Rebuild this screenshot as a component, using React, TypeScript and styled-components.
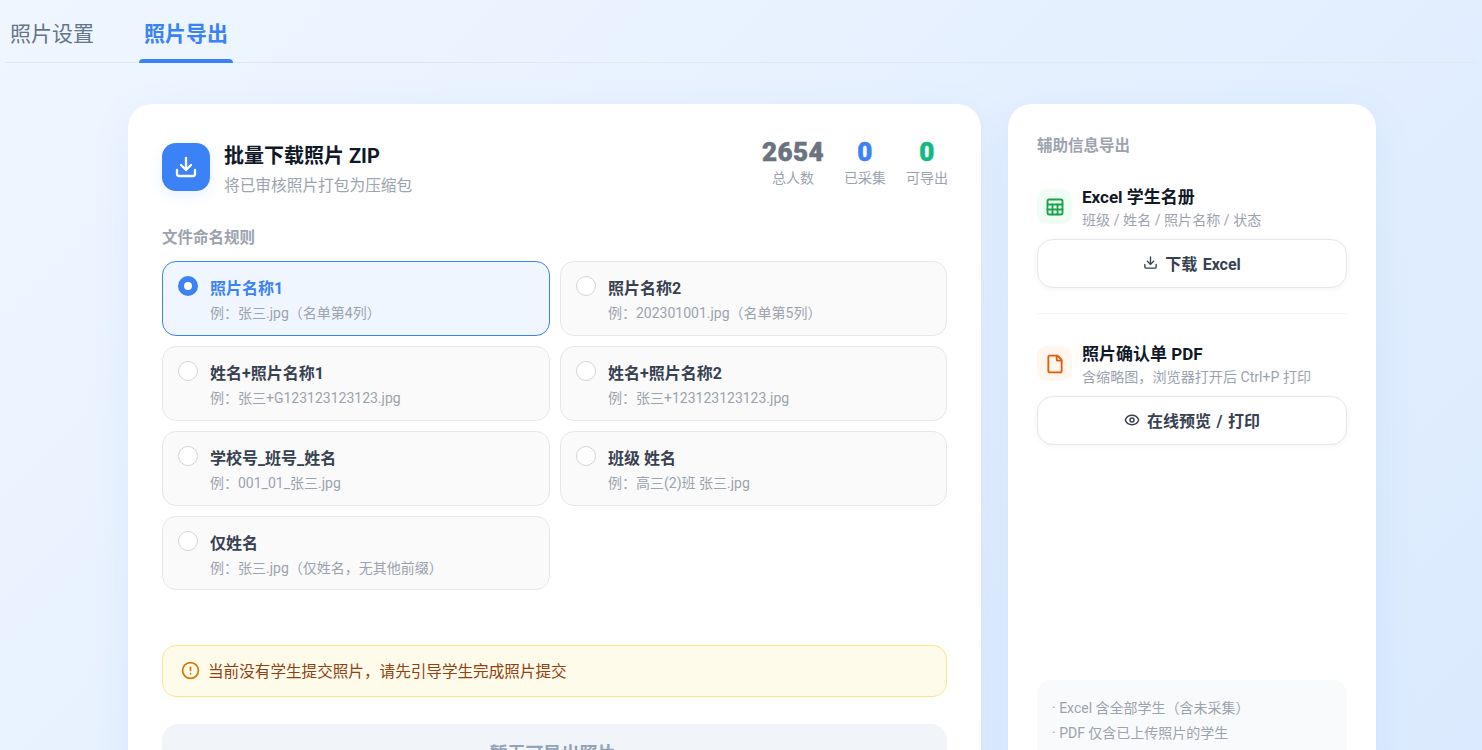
import React from 'react';
import styled, { createGlobalStyle } from 'styled-components';
import { Download, Sheet, File, Eye, CircleAlert } from 'lucide-react';

const Global = createGlobalStyle`
  html, body { margin: 0; padding: 0; height: 750px; overflow: hidden; }
  body {
    font-family: Roboto, "Noto Sans", "Noto Sans CJK SC", sans-serif;
    background: linear-gradient(135deg, #eff6ff 0%, #dbeafe 100%);
  }
  * { box-sizing: border-box; }
`;

const Page = styled.div`
  padding: 0 5px;
`;
const Tabs = styled.nav`
  display: flex;
  gap: 40px;
  height: 63px;
  border-bottom: 1px solid #e2e8f0;
`;
const Tab = styled.div<{ $active?: boolean }>`
  position: relative;
  width: 94px;
  padding: 20px 5px 0;
  font-size: 21px;
  line-height: 29px;
  font-weight: ${(p) => (p.$active ? 700 : 400)};
  color: ${(p) => (p.$active ? '#3b82f6' : '#64748b')};
  ${(p) =>
    p.$active &&
    `&::after {
      content: '';
      position: absolute;
      left: 0; right: 0; bottom: -1px;
      height: 4px;
      border-radius: 4px 4px 0 0;
      background: #3b82f6;
    }`}
`;
const Content = styled.main`
  display: grid;
  grid-template-columns: 853px 368px;
  gap: 27px;
  padding: 41px 0 0 123px;
  align-items: stretch;
`;
const Card = styled.section`
  background: #fff;
  border-radius: 24px;
  box-shadow: 0 10px 40px rgba(59, 130, 246, 0.08);
`;
const MainCard = styled(Card)`
  padding: 39px 34px;
`;
const Header = styled.header`
  display: flex;
  align-items: center;
  justify-content: space-between;
  height: 48px;
`;
const HeaderLeft = styled.div`
  display: flex;
  align-items: center;
  gap: 14px;
`;
const HeroText = styled.div`
  padding-top: 5px;
`;
const HeroIcon = styled.div`
  width: 48px;
  height: 48px;
  border-radius: 14px;
  background: #3b82f6;
  color: #fff;
  display: flex;
  align-items: center;
  justify-content: center;
  box-shadow: 0 4px 14px rgba(59, 130, 246, 0.12);
`;
const HeroTitle = styled.h1`
  margin: 0;
  font-size: 20px;
  line-height: 28px;
  font-weight: 700;
  color: #111827;
`;
const HeroSub = styled.p`
  margin: 5px 0 0;
  font-size: 15.7px;
  line-height: 22px;
  color: #9ca3af;
`;
const Stats = styled.div`
  display: flex;
  gap: 20px;
  margin: 0 -1px 10px 0;
`;
const Stat = styled.div`
  display: flex;
  flex-direction: column;
  align-items: center;
`;
const StatValue = styled.div<{ $color: string }>`
  font-size: 26px;
  line-height: 32px;
  font-weight: 900;
  letter-spacing: 0.4px;
  -webkit-text-stroke: 0.5px ${(p) => p.$color};
  color: ${(p) => p.$color};
`;
const StatLabel = styled.div`
  font-size: 14px;
  line-height: 20px;
  color: #9ca3af;
`;
const SectionLabel = styled.div`
  font-size: 15.5px;
  line-height: 22px;
  font-weight: 700;
  color: #9ca3af;
  height: 24px;
`;
const RuleLabel = styled(SectionLabel)`
  margin-top: 36px;
`;
const Options = styled.div`
  display: grid;
  grid-template-columns: 388px 387px;
  grid-auto-rows: 74.75px;
  gap: 10px;
  margin-top: 10.3px;
`;
const Option = styled.div<{ $active?: boolean }>`
  display: flex;
  gap: 12px;
  padding: 14px 15px;
  border-radius: 14px;
  border: 1px solid ${(p) => (p.$active ? '#3b82f6' : '#e5e7eb')};
  background: ${(p) => (p.$active ? '#eff6ff' : '#fafafa')};
`;
const Radio = styled.span<{ $active?: boolean }>`
  flex: none;
  width: 20px;
  height: 20px;
  border-radius: 50%;
  background: #fff;
  border: ${(p) => (p.$active ? '6px solid #3b82f6' : '1px solid #d1d5db')};
`;
const OptionText = styled.div`
  padding-top: 1px;
`;
const OptionTitle = styled.div<{ $active?: boolean }>`
  font-size: 16px;
  line-height: 24px;
  font-weight: 700;
  color: ${(p) => (p.$active ? '#3b82f6' : '#374151')};
`;
const OptionExample = styled.div`
  margin-top: 3px;
  font-size: 14px;
  line-height: 18px;
  color: #9ca3af;
`;
const Alert = styled.div`
  display: flex;
  align-items: center;
  gap: 8px;
  height: 52px;
  margin-top: 54.7px;
  padding: 0 18px 2px;
  border-radius: 14px;
  border: 1px solid #fde68a;
  background: #fffbeb;
  font-size: 15.6px;
  color: #92400e;
  svg { color: #d97706; flex: none; margin-top: 2px; }
`;
const PrimaryButton = styled.button`
  display: block;
  width: 100%;
  height: 56px;
  margin-top: 27px;
  padding: 0 4px 0 0;
  border: none;
  border-radius: 16px;
  background: #f1f5f9;
  color: #94a3b8;
  font: inherit;
  font-size: 18px;
  font-weight: 700;
`;
const SideCard = styled(Card)`
  display: flex;
  flex-direction: column;
  padding: 31px 29px 39px;
`;
const ExportBlock = styled.div`
  margin-top: 26px;
`;
const ExportHead = styled.div`
  display: flex;
  gap: 10px;
  align-items: flex-start;
`;
const ExportIcon = styled.div<{ $bg: string; $fg: string }>`
  width: 35px;
  height: 35px;
  margin-top: 4px;
  border-radius: 10px;
  background: ${(p) => p.$bg};
  color: ${(p) => p.$fg};
  display: flex;
  align-items: center;
  justify-content: center;
`;
const ExportTitle = styled.div`
  font-size: 17px;
  line-height: 24px;
  font-weight: 700;
  color: #111827;
`;
const ExportSub = styled.div`
  font-size: 14.1px;
  line-height: 22px;
  color: #9ca3af;
`;
const OutlineButton = styled.button`
  display: flex;
  align-items: center;
  justify-content: center;
  gap: 7px;
  width: 100%;
  height: 49px;
  margin-top: 8px;
  padding: 0 0 2px;
  border: 1px solid #e5e7eb;
  border-radius: 16px;
  background: #fff;
  box-shadow: 0 1px 6px rgba(0, 0, 0, 0.05);
  color: #374151;
  font: inherit;
  font-size: 16px;
  font-weight: 700;
  word-spacing: 1.5px;
`;
const Divider = styled.hr`
  margin: 25px 0 2px;
  border: none;
  border-top: 1px solid #f3f4f6;
`;
const Note = styled.div`
  margin-top: auto;
  padding: 16px 15px 15px;
  min-height: 100px;
  border-radius: 14px;
  background: #f9fafb;
  font-size: 14px;
  line-height: 25px;
  color: #9ca3af;
`;

const options = [
  ['照片名称1', '例：张三.jpg（名单第4列）'],
  ['照片名称2', '例：202301001.jpg（名单第5列）'],
  ['姓名+照片名称1', '例：张三+G123123123123.jpg'],
  ['姓名+照片名称2', '例：张三+123123123123.jpg'],
  ['学校号_班号_姓名', '例：001_01_张三.jpg'],
  ['班级 姓名', '例：高三(2)班 张三.jpg'],
  ['仅姓名', '例：张三.jpg（仅姓名，无其他前缀）'],
];

export default function App() {
  return (
    <Page>
      <Global />
      <Tabs>
        <Tab>照片设置</Tab>
        <Tab $active>照片导出</Tab>
      </Tabs>
      <Content>
        <MainCard>
          <Header>
            <HeaderLeft>
              <HeroIcon><Download size={24} strokeWidth={2.3} /></HeroIcon>
              <HeroText>
                <HeroTitle>批量下载照片 ZIP</HeroTitle>
                <HeroSub>将已审核照片打包为压缩包</HeroSub>
              </HeroText>
            </HeaderLeft>
            <Stats>
              <Stat><StatValue $color="#6b7280">2654</StatValue><StatLabel>总人数</StatLabel></Stat>
              <Stat><StatValue $color="#3b82f6">0</StatValue><StatLabel>已采集</StatLabel></Stat>
              <Stat><StatValue $color="#10b981">0</StatValue><StatLabel>可导出</StatLabel></Stat>
            </Stats>
          </Header>
          <RuleLabel>文件命名规则</RuleLabel>
          <Options>
            {options.map(([t, e], i) => (
              <Option key={t} $active={i === 0}>
                <Radio $active={i === 0} />
                <OptionText>
                  <OptionTitle $active={i === 0}>{t}</OptionTitle>
                  <OptionExample>{e}</OptionExample>
                </OptionText>
              </Option>
            ))}
          </Options>
          <Alert><CircleAlert size={19} strokeWidth={2.2} />当前没有学生提交照片，请先引导学生完成照片提交</Alert>
          <PrimaryButton disabled>暂无可导出照片</PrimaryButton>
        </MainCard>
        <SideCard>
          <SectionLabel>辅助信息导出</SectionLabel>
          <ExportBlock>
            <ExportHead>
              <ExportIcon $bg="#f0fdf4" $fg="#16a34a"><Sheet size={20} strokeWidth={2.2} /></ExportIcon>
              <div>
                <ExportTitle>Excel 学生名册</ExportTitle>
                <ExportSub>班级 / 姓名 / 照片名称 / 状态</ExportSub>
              </div>
            </ExportHead>
            <OutlineButton><Download size={15} strokeWidth={2.2} />下载 Excel</OutlineButton>
          </ExportBlock>
          <Divider />
          <ExportBlock>
            <ExportHead>
              <ExportIcon $bg="#fff7ed" $fg="#ea580c"><File size={20} strokeWidth={2.2} /></ExportIcon>
              <div>
                <ExportTitle>照片确认单 PDF</ExportTitle>
                <ExportSub>含缩略图，浏览器打开后 Ctrl+P 打印</ExportSub>
              </div>
            </ExportHead>
            <OutlineButton><Eye size={16} strokeWidth={2.2} />在线预览 / 打印</OutlineButton>
          </ExportBlock>
          <Note>
            <div>· Excel 含全部学生（含未采集）</div>
            <div>· PDF 仅含已上传照片的学生</div>
          </Note>
        </SideCard>
      </Content>
    </Page>
  );
}
